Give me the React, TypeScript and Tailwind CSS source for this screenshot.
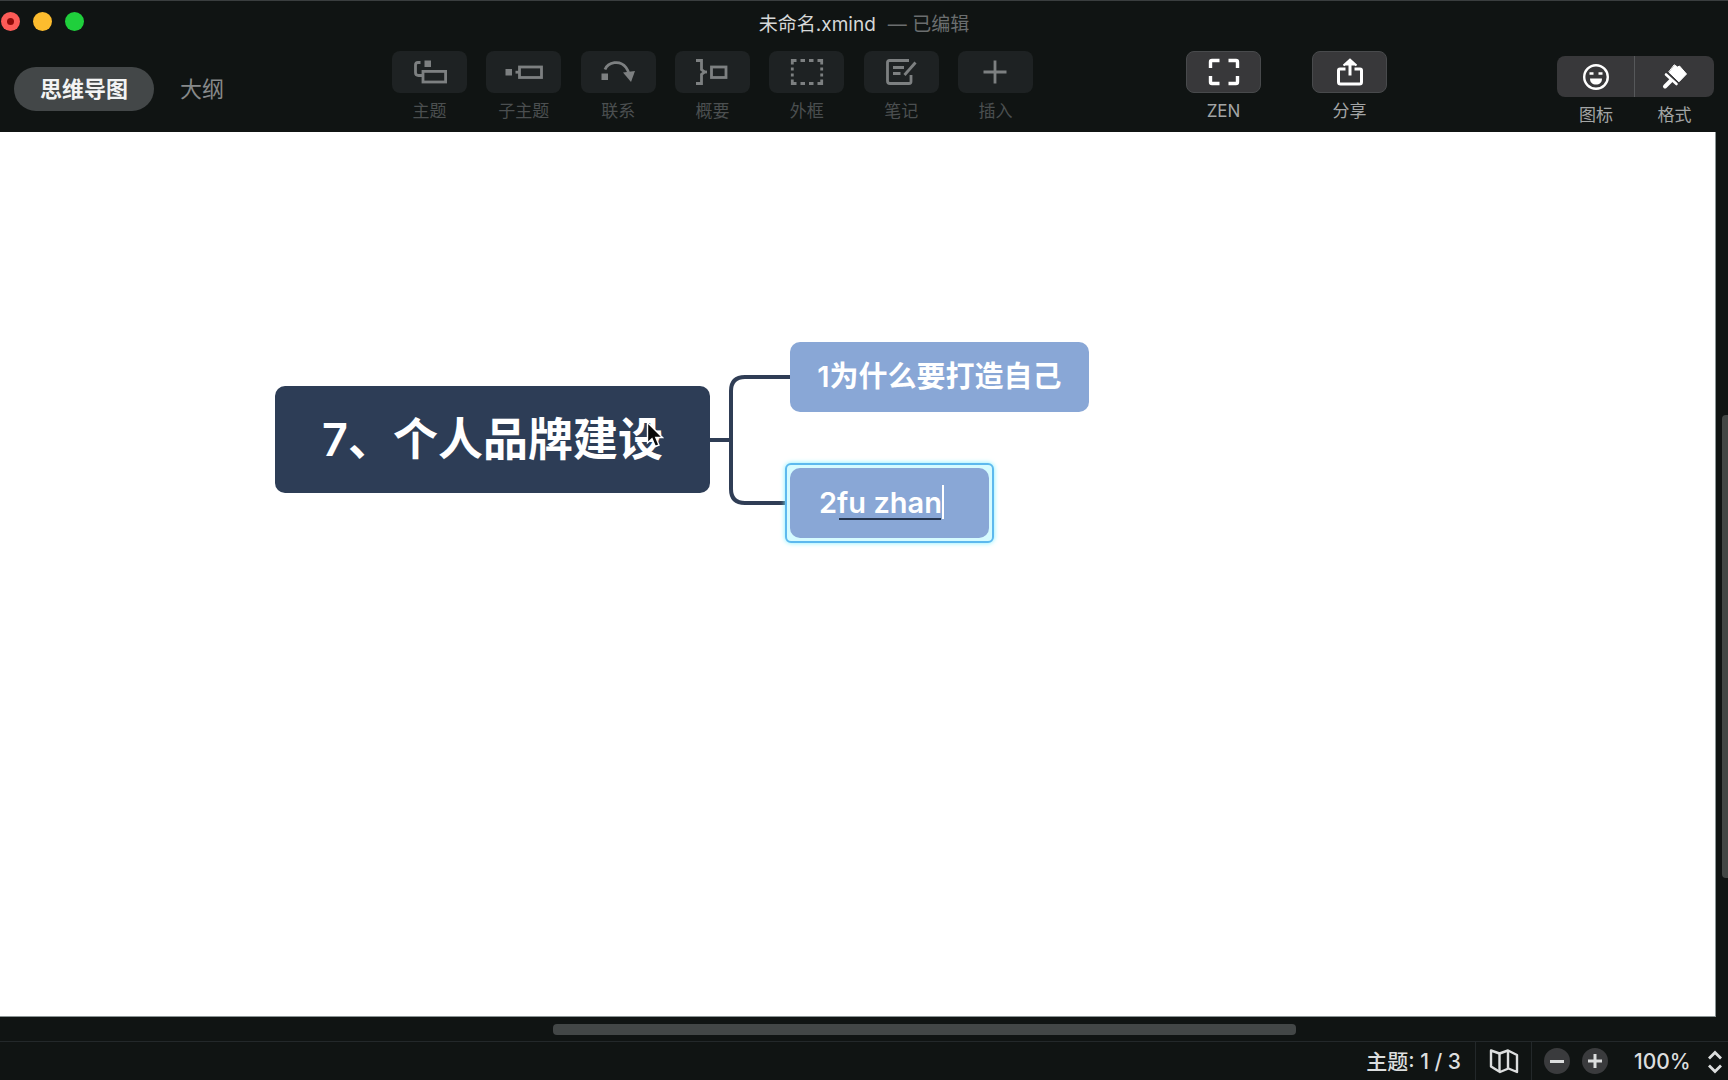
import React, { useState } from 'react'

type Tool = { label: string; icon: React.ReactNode }

const TopicIcon = () => (
  <svg viewBox="0 0 36 28" className="w-9 h-7" fill="none" stroke="currentColor" strokeWidth="2.8">
    <path d="M8.500 4.500H6Q3.500 4.500 3.500 7V14.500Q3.500 17.500 6.500 17.500H10" />
    <rect x="11" y="13.400" width="22.600" height="10.600" />
    <rect x="12.500" y="2.500" width="6.500" height="6.500" fill="currentColor" stroke="none" />
  </svg>
)

const SubtopicIcon = () => (
  <svg viewBox="0 0 40 28" className="w-10 h-7" fill="none" stroke="currentColor" strokeWidth="2.8">
    <rect x="1.500" y="11" width="6.500" height="6.500" fill="currentColor" stroke="none" />
    <path d="M11.500 14.200H16" />
    <rect x="15.500" y="9" width="22" height="10.500" />
  </svg>
)

const RelationIcon = () => (
  <svg viewBox="0 0 36 28" className="w-9 h-7" fill="none" stroke="currentColor" strokeWidth="2.8">
    <path d="M5 11.500C8 4 20 1.500 26 9.500C27.500 11.500 28.500 13.500 29 16" />
    <path d="M23 14.500L35 13L31 24Z" fill="currentColor" stroke="none" />
    <rect x="1.500" y="15.500" width="6.500" height="6.500" fill="currentColor" stroke="none" />
  </svg>
)

const SummaryIcon = () => (
  <svg viewBox="0 0 36 28" className="w-9 h-7" fill="none" stroke="currentColor" strokeWidth="2.8">
    <path d="M2 2.500H7.500V11.500L10.500 14L7.500 16.500V25.500H2" />
    <path d="M9 14H13" />
    <rect x="17.500" y="9" width="14.500" height="10.500" />
  </svg>
)

const BoundaryIcon = () => (
  <svg viewBox="0 0 36 28" className="w-9 h-7" fill="none" stroke="currentColor" strokeWidth="2.8">
    <path d="M3.300 6.500V2.500H7.500M28.500 2.500H32.700V6.500M32.700 21.500V25.500H28.500M7.500 25.500H3.300V21.500" />
    <path d="M11.500 2.500H16M20 2.500H24.500M11.500 25.500H16M20 25.500H24.500M3.300 9.500V12.500M3.300 15.500V18.500M32.700 9.500V12.500M32.700 15.500V18.500" />
  </svg>
)

const NoteIcon = () => (
  <svg viewBox="0 0 34 28" className="w-[34px] h-7" fill="none" stroke="currentColor" strokeWidth="2.8">
    <path d="M25 2.500H5.500Q3.500 2.500 3.500 4.500V23Q3.500 25.500 6 25.500H25Q27 25.500 27 23.500V17" />
    <path d="M9 9.500H20M9 15.500H16.500" />
    <path d="M20.500 17L31.500 4.500" />
  </svg>
)

const InsertIcon = () => (
  <svg viewBox="0 0 28 28" className="w-7 h-7" fill="none" stroke="currentColor" strokeWidth="2.8">
    <path d="M14 2.500V25.500M2.500 14H25.500" />
  </svg>
)

const ZenIcon = () => (
  <svg viewBox="0 0 32 28" className="w-8 h-7" fill="none" stroke="currentColor" strokeWidth="3.400">
    <path d="M11.500 2.500H4Q2.500 2.500 2.500 4V10M20.500 2.500H28Q29.500 2.500 29.500 4V10M29.500 18V24Q29.500 25.500 28 25.500H20.500M11.500 25.500H4Q2.500 25.500 2.500 24V18" />
  </svg>
)

const ShareIcon = () => (
  <svg viewBox="0 0 28 30" className="w-7 h-[30px]" fill="none" stroke="currentColor" strokeWidth="3">
    <path d="M9.500 12H4Q2.500 12 2.500 13.500V25Q2.500 27 4.500 27H23.500Q25.500 27 25.500 25V13.500Q25.500 12 24 12H18.500" />
    <path d="M14 18.500V4" />
    <path d="M7.500 8.500L14 2.500L20.500 8.500" fill="currentColor" strokeWidth="2" />
  </svg>
)

const SmileIcon = () => (
  <svg viewBox="0 0 28 28" className="w-7 h-7" fill="none" stroke="currentColor" strokeWidth="2.400">
    <circle cx="14" cy="14" r="11.800" />
    <path d="M8 15.500H20C20 19.500 17.500 21.500 14 21.500S8 19.500 8 15.500Z" fill="currentColor" stroke="none" />
    <path d="M7.500 10.500H11.500M16.500 10.500H20.500" />
  </svg>
)

const BrushIcon = () => (
  <svg viewBox="0 0 28 28" className="w-7 h-7" fill="currentColor" stroke="currentColor" strokeLinecap="round">
    <path d="M13.500 2L16.500 4L18.500 3L25.500 11L18 18.800L8 9.200Z" strokeWidth="1" strokeLinejoin="round" />
    <path d="M5 11.500L15.500 21" strokeWidth="2.600" />
    <path d="M10 17.500L4 23.500" strokeWidth="4" />
  </svg>
)

const MapIcon = () => (
  <svg viewBox="0 0 30 26" className="w-[30px] h-[26px]" fill="none" stroke="currentColor" strokeWidth="2.400" strokeLinejoin="round">
    <path d="M2 2.500L10.500 5.500L19 2.500L28 7V24L19.500 20.500L11 24L2 18.500Z" />
    <path d="M10.500 5.500V23.500M19 2.500V20.500" />
  </svg>
)

const editTools: Tool[] = [
  { label: '主题', icon: <TopicIcon /> },
  { label: '子主题', icon: <SubtopicIcon /> },
  { label: '联系', icon: <RelationIcon /> },
  { label: '概要', icon: <SummaryIcon /> },
  { label: '外框', icon: <BoundaryIcon /> },
  { label: '笔记', icon: <NoteIcon /> },
  { label: '插入', icon: <InsertIcon /> },
]

const viewTools: Tool[] = [
  { label: 'ZEN', icon: <ZenIcon /> },
  { label: '分享', icon: <ShareIcon /> },
]

const TitleBar: React.FC = () => (
  <div className="grid grid-cols-[1fr_auto_1fr] items-start h-[46px] pt-[11px]">
    <div className="flex gap-[13px] pl-px">
      <button aria-label="关闭" className="flex items-center justify-center w-[19px] h-[19px] rounded-full bg-[#fc5b57]">
        <span className="w-[7px] h-[7px] rounded-full bg-[#8e0a08]" />
      </button>
      <button aria-label="最小化" className="w-[19px] h-[19px] rounded-full bg-[#fdbc2e]" />
      <button aria-label="缩放" className="w-[19px] h-[19px] rounded-full bg-[#1fcf3c]" />
    </div>
    <h1 className="flex gap-3 text-[19px] leading-[26px] text-[#d6d8d8]">
      <span>未命名.xmind</span>
      <span className="text-[#6b6e6f]">— 已编辑</span>
    </h1>
    <div />
  </div>
)

const Toolbar: React.FC = () => (
  <div className="flex items-start h-[85px] pl-[14px] pr-[14px] pt-1">
    <nav className="flex items-center w-[378px] shrink-0 pt-4">
      <button className="h-11 w-[140px] rounded-full bg-[#434748] text-[22px] font-bold text-[#f2f3f3]">思维导图</button>
      <button className="h-11 px-[26px] text-[22px] text-[#87898a]">大纲</button>
    </nav>
    <div className="flex justify-between w-[641px]">
      {editTools.map((tool) => (
        <button key={tool.label} disabled className="flex flex-col items-center w-[75px]">
          <span className="flex items-center justify-center w-full h-[42px] rounded-lg bg-[#1e2223] text-[#7d8081]">
            {tool.icon}
          </span>
          <span className="mt-1.5 text-[17px] leading-6 text-[#4b4f50]">{tool.label}</span>
        </button>
      ))}
    </div>
    <div className="grow-[153]" />
    <div className="flex gap-[51px]">
      {viewTools.map((tool) => (
        <button key={tool.label} className="flex flex-col items-center w-[75px]">
          <span className="flex items-center justify-center w-full h-[42px] rounded-lg border border-[#484a4c] bg-[#38383a] text-white">
            {tool.icon}
          </span>
          <span className="mt-1.5 text-[17px] leading-6 text-[#a3a5a5]">{tool.label}</span>
        </button>
      ))}
    </div>
    <div className="grow-[170]" />
    <div className="flex pt-[5px]">
      <button className="flex flex-col items-center w-[78px]">
        <span className="flex items-center justify-center w-full h-[41px] rounded-l-lg border-r border-[#56585a] bg-[#38383a] text-white">
          <SmileIcon />
        </span>
        <span className="mt-1.5 text-[17px] leading-6 text-[#a3a5a5]">图标</span>
      </button>
      <button className="flex flex-col items-center w-[79px]">
        <span className="flex items-center justify-center w-full h-[41px] rounded-r-lg bg-[#38383a] text-white">
          <BrushIcon />
        </span>
        <span className="mt-1.5 text-[17px] leading-6 text-[#a3a5a5]">格式</span>
      </button>
    </div>
  </div>
)

const MindMap: React.FC = () => {
  const [draft, setDraft] = useState('2fu zhan')

  return (
    <main className="relative flex-1 min-w-0 overflow-hidden bg-white border-r border-b border-[#8b9494]">
      {/* Branch lines */}
      <svg className="absolute left-[708px] top-[230px] w-[86px] h-[160px]" fill="none" stroke="#2f3d55" strokeWidth="4">
        <path d="M0 78H23M84 15H37Q23 15 23 29V127Q23 141 37 141H84" />
      </svg>

      {/* Central topic */}
      <div className="absolute left-[275px] top-[254px] flex items-center justify-center w-[435px] h-[107px] rounded-[10px] bg-[#2d3d56] text-[45px] font-semibold text-white whitespace-nowrap">
        7、个人品牌建设
      </div>

      <div className="absolute left-[790px] top-[210px] flex items-center justify-center w-[299px] h-[70px] rounded-[10px] bg-[#89a7d6] text-[29px] font-semibold text-white whitespace-nowrap">
        1为什么要打造自己
      </div>

      {/* Topic being edited */}
      <div className="absolute left-[785px] top-[331px] p-[3px] rounded-md border-2 border-[#5db9ee] bg-[#d5fbff] shadow-[0_0_5px_#7fefff]">
        <label className="relative flex items-center w-[199px] h-[70px] pl-[29px] rounded-[10px] bg-[#89a7d6]">
          <input
            aria-label="主题"
            value={draft}
            onChange={(e) => setDraft(e.target.value)}
            className="w-[150px] bg-transparent text-[29px] font-semibold text-white outline-none"
          />
          <span className="absolute left-[49px] top-[50px] w-[102px] h-0.5 bg-[#26364f]" />
          <span className="absolute left-[152px] top-[17px] w-0.5 h-[34px] bg-white" />
        </label>
      </div>

      {/* Pointer */}
      <svg viewBox="0 0 18 28" className="absolute left-[646px] top-[289px] w-[18px] h-7">
        <path d="M1.500 1.500V22L6 17.800L9.300 25.500L13 24L9.800 16.500H16.500Z" fill="#0a0a0a" stroke="#fff" strokeWidth="1.400" />
      </svg>
    </main>
  )
}

const StatusBar: React.FC = () => (
  <footer className="flex items-center justify-end h-[39px] border-t border-[#23282a] text-[21px] font-medium text-[#dcdede]">
    <span className="pt-0.5 pr-[14px]">主题: 1 / 3</span>
    <button aria-label="导图概览" className="flex items-center justify-center w-[57px] h-full border-x border-[#23282a]">
      <MapIcon />
    </button>
    <div className="flex gap-3 pl-3">
      <button aria-label="缩小" className="flex items-center justify-center w-[26px] h-[26px] rounded-full bg-[#3a3b3d]">
        <span className="w-[14px] h-[3px] bg-current" />
      </button>
      <button aria-label="放大" className="flex items-center justify-center w-[26px] h-[26px] rounded-full bg-[#3a3b3d]">
        <svg viewBox="0 0 14 14" className="w-[14px] h-[14px]" stroke="currentColor" strokeWidth="3">
          <path d="M7 0V14M0 7H14" />
        </svg>
      </button>
    </div>
    <label className="relative flex items-center ml-[26px] pt-0.5">
      <select aria-label="缩放比例" defaultValue="100" className="w-[94px] appearance-none bg-transparent outline-none">
        <option value="50">50%</option>
        <option value="100">100%</option>
        <option value="200">200%</option>
      </select>
      <svg viewBox="0 0 16 24" className="absolute right-[5px] w-4 h-6 pointer-events-none" fill="none" stroke="currentColor" strokeWidth="2.800">
        <path d="M2 8.500L8 2.500L14 8.500M2 15.500L8 21.500L14 15.500" />
      </svg>
    </label>
  </footer>
)

export default function App() {
  return (
    <div className="flex flex-col h-screen overflow-hidden bg-[#101413] font-[Inter,'Noto_Sans_CJK_SC',sans-serif]">
      <header className="border-t border-[#3a3e3f]">
        <TitleBar />
        <Toolbar />
      </header>
      <div className="flex flex-1 min-h-0">
        <MindMap />
        {/* Vertical scrollbar */}
        <div className="flex flex-col w-3 pl-1.5">
          <div className="grow-[283]" />
          <div className="grow-[462] rounded-l bg-[#434745]" />
          <div className="grow-[139]" />
        </div>
      </div>
      {/* Horizontal scrollbar */}
      <div className="flex items-center h-6">
        <div className="grow-[553]" />
        <div className="grow-[743] h-[11px] rounded bg-[#434747]" />
        <div className="grow-[432]" />
      </div>
      <StatusBar />
    </div>
  )
}
